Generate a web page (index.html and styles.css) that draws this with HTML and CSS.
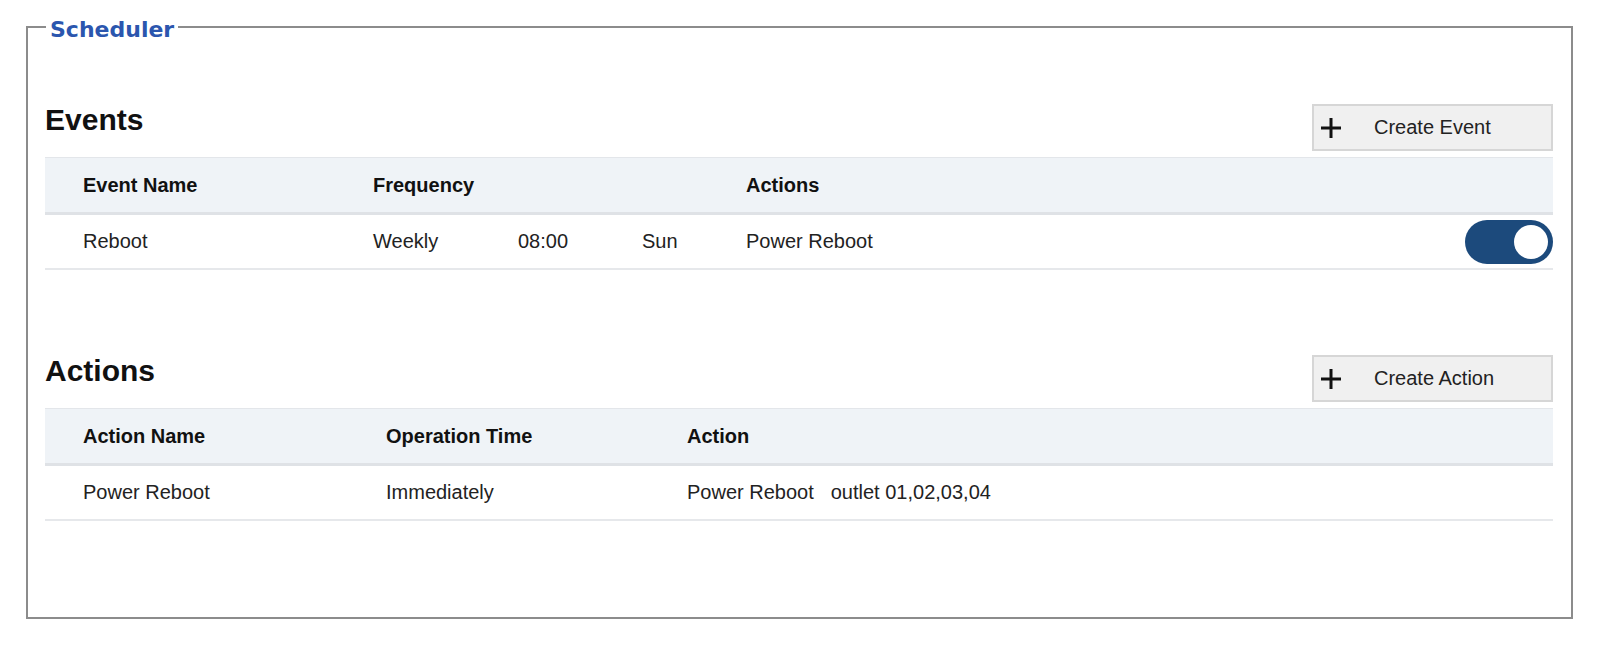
FILE: index.html
```html
<!DOCTYPE html>
<html lang="en">
<head>
    <meta charset="UTF-8">
    <title>Scheduler</title>
    <link rel="stylesheet" href="styles.css">
</head>
<body>
    <fieldset class="scheduler">
        <legend>Scheduler</legend>

        <div class="section events">
            <div class="section-head">
                <h2>Events</h2>
                <button class="create-btn" type="button">
                    <svg class="plus" width="22" height="22" viewBox="0 0 22 22"><path d="M11 1v20M1 11h20" stroke="#111" stroke-width="3"/></svg>
                    <span>Create Event</span>
                </button>
            </div>
            <table class="list events-list">
                <colgroup>
                    <col style="width: 328px">
                    <col style="width: 373px">
                    <col>
                    <col style="width: 130px">
                </colgroup>
                <thead>
                    <tr>
                        <th>Event Name</th>
                        <th>Frequency</th>
                        <th>Actions</th>
                        <th></th>
                    </tr>
                </thead>
                <tbody>
                    <tr>
                        <td>Reboot</td>
                        <td><span class="freq">Weekly</span><span class="time">08:00</span><span>Sun</span></td>
                        <td>Power Reboot</td>
                        <td class="toggle-cell"><span class="toggle on"><span class="knob"></span></span></td>
                    </tr>
                </tbody>
            </table>
        </div>

        <div class="section actions">
            <div class="section-head">
                <h2>Actions</h2>
                <button class="create-btn" type="button">
                    <svg class="plus" width="22" height="22" viewBox="0 0 22 22"><path d="M11 1v20M1 11h20" stroke="#111" stroke-width="3"/></svg>
                    <span>Create Action</span>
                </button>
            </div>
            <table class="list actions-list">
                <colgroup>
                    <col style="width: 341px">
                    <col style="width: 301px">
                    <col>
                </colgroup>
                <thead>
                    <tr>
                        <th>Action Name</th>
                        <th>Operation Time</th>
                        <th>Action</th>
                    </tr>
                </thead>
                <tbody>
                    <tr>
                        <td>Power Reboot</td>
                        <td>Immediately</td>
                        <td>Power Reboot<span class="target">outlet 01,02,03,04</span></td>
                    </tr>
                </tbody>
            </table>
        </div>
    </fieldset>
</body>
</html>
```

FILE: styles.css
```css
body {
    margin: 0;
    background: #fff;
    font-family: "Liberation Sans", Arial, sans-serif;
    color: #222;
}
.scheduler {
    margin: 11px 27px 0 26px;
    padding: 0 18px 96px 17px;
    border: 2px solid #8c8c8c;
    min-width: 0;
}
.scheduler legend {
    margin-left: 1px;
    padding: 6px 4px 0;
    font-family: "DejaVu Sans", Verdana, sans-serif;
    font-weight: bold;
    font-size: 22px;
    line-height: 26px;
    color: #2b56ae;
}
.section-head {
    display: flex;
    justify-content: space-between;
    align-items: flex-start;
    height: 47px;
    margin-bottom: 6px;
}
.events .section-head {
    margin-top: 61px;
}
.actions .section-head {
    margin-top: 85px;
}
h2 {
    margin: 0;
    font-size: 30px;
    line-height: 32px;
    font-weight: bold;
    color: #111;
}
.create-btn {
    display: flex;
    align-items: center;
    width: 241px;
    height: 47px;
    padding: 0 0 0 6px;
    background: #f0f0f0;
    border: 2px solid #d6d6d6;
    border-radius: 0;
    font-family: "Liberation Sans", Arial, sans-serif;
    font-size: 20px;
    color: #222;
    cursor: pointer;
}
.create-btn .plus {
    margin-right: 32px;
}
.list {
    width: 100%;
    border-collapse: collapse;
    table-layout: fixed;
    font-size: 20px;
}
.list th {
    height: 54px;
    padding: 0;
    text-align: left;
    font-weight: bold;
    color: #111;
    background: #eff3f7;
    border-top: 1px solid #e3e6ea;
    border-bottom: 3px solid #dfe2e6;
}
.list td {
    height: 53px;
    padding: 0;
    border-bottom: 2px solid #e6e8eb;
}
.list th:first-child,
.list td:first-child {
    padding-left: 38px;
}
.freq {
    display: inline-block;
    width: 145px;
}
.time {
    display: inline-block;
    width: 124px;
}
.target {
    margin-left: 17px;
}
.toggle-cell {
    text-align: right;
    padding-right: 3px;
}
.toggle {
    display: inline-block;
    position: relative;
    width: 88px;
    height: 44px;
    border-radius: 22px;
    background: #1c4a7c;
    vertical-align: middle;
}
.toggle .knob {
    position: absolute;
    top: 5px;
    right: 5px;
    width: 34px;
    height: 34px;
    border-radius: 50%;
    background: #fff;
}
```
